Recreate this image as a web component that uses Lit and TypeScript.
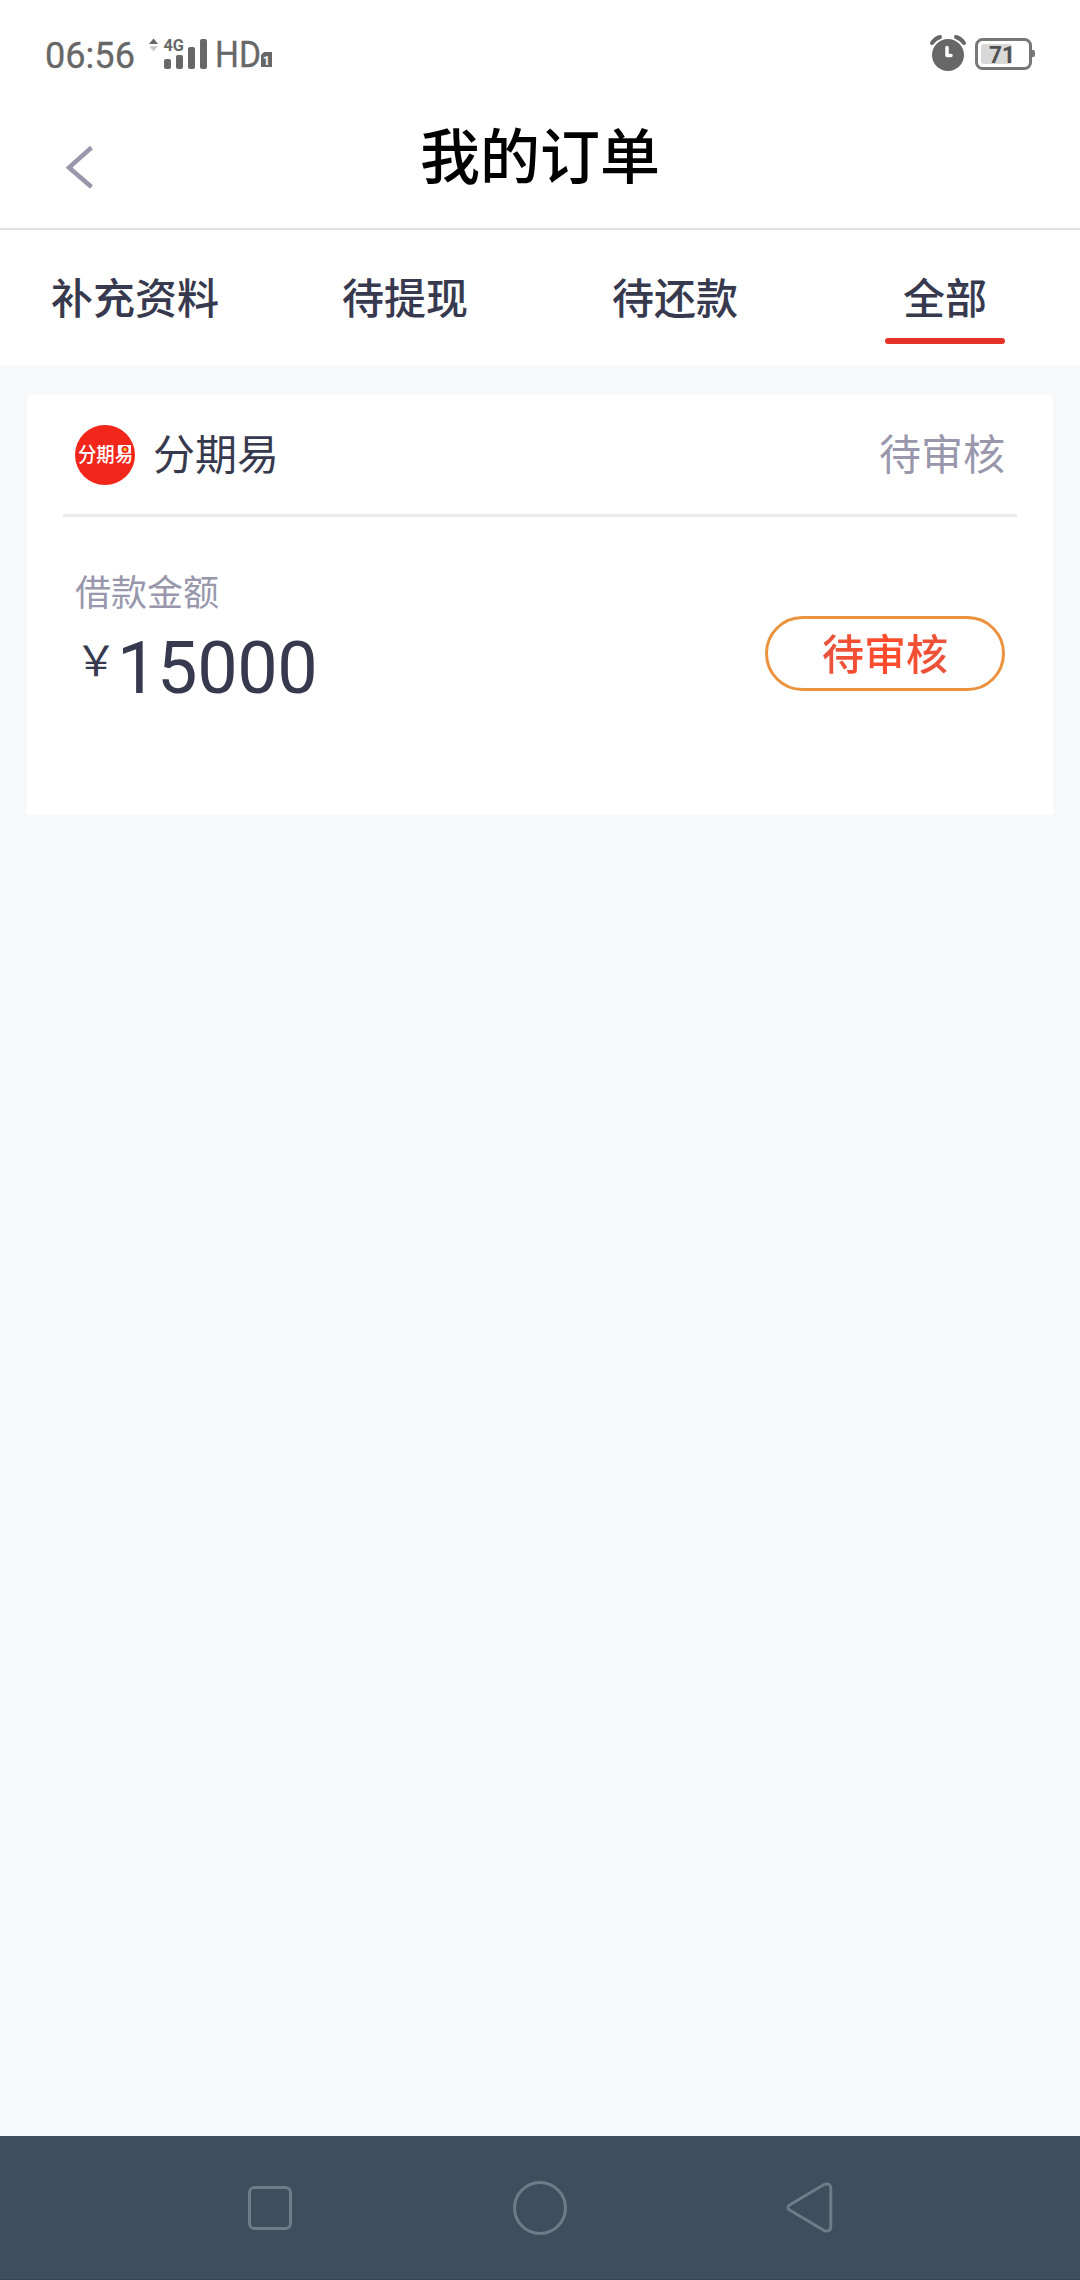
import { LitElement, html, css, svg } from "lit";
import { customElement } from "lit/decorators.js";

@customElement("status-bar")
class StatusBar extends LitElement {
  static styles = css`
    :host { display: flex; justify-content: space-between; height: 105px; box-sizing: border-box; }
    svg { display: block; }
    text { font-family: Roboto, "Liberation Sans", sans-serif; }
    .dim { fill: #676767; }
  `;
  render() {
    return html`
      <svg width="300" height="105" viewBox="0 0 300 105">
        <text class="dim" x="45" y="67.5" font-size="36" stroke="#676767" stroke-width="0.3" textLength="90" lengthAdjust="spacingAndGlyphs">06:56</text>
        <path fill="#676767" d="M149 44l4.500-5.500 4.500 5.500z" />
        <path fill="#c8c8c8" d="M149 46.200h9l-4.500 5z" />
        <text class="dim" x="163.500" y="51" font-size="17" font-weight="700" textLength="20.500" lengthAdjust="spacingAndGlyphs">4G</text>
        <g fill="#676767">
          <rect x="164" y="59" width="7" height="10" rx="2" />
          <rect x="176" y="55" width="7" height="14" rx="2" />
          <rect x="188" y="47" width="7" height="22" rx="2" />
          <rect x="200" y="39" width="7" height="30" rx="2" />
        </g>
        <text class="dim" x="215" y="67" font-size="36" stroke="#676767" stroke-width="0.3" textLength="46" lengthAdjust="spacingAndGlyphs">HD</text>
        <path fill="#676767" d="M264 52h8v15h-11V55z" />
        <text x="263" y="64.500" font-size="12" font-weight="700" fill="#fff">1</text>
      </svg>
      <svg width="160" height="105" viewBox="920 0 160 105">
        <circle cx="948" cy="55" r="16" fill="#676767" />
        <path fill="none" stroke="#676767" stroke-width="4" stroke-linecap="round" d="M932 43q3-4.500 8-6M964 43q-3-4.500-8-6" />
        <path fill="none" stroke="#fff" stroke-width="3.500" stroke-linecap="round" stroke-linejoin="round" d="M947 47.500v8h4" />
        <rect x="976.500" y="39.500" width="54" height="29" rx="6" fill="#fff" stroke="#777" stroke-width="3" />
        <path fill="#777" d="M1032 50h1.500q1.500 0 1.500 3.500t-1.500 3.500H1032z" />
        <rect x="981" y="44" width="31" height="20" rx="3" fill="#d8d8d8" />
        <text x="989" y="63" font-size="24" font-weight="700" fill="#505050" textLength="26" lengthAdjust="spacingAndGlyphs">71</text>
      </svg>
    `;
  }
}

@customElement("order-card")
class OrderCard extends LitElement {
  static styles = css`
    :host { display: block; height: 420px; box-sizing: border-box; background: #fff; border-radius: 4px; padding: 0 36px; }
    .head { display: flex; align-items: center; height: 119px; padding: 0 12px; font-size: 42px; line-height: 60px; color: #373a4e; }
    .head span { margin-bottom: 6px; }
    .logo { display: block; width: 60px; height: 60px; margin-right: 18px; overflow: visible; }
    .head .status { margin-left: auto; color: #9897ac; }
    .rule { height: 3px; background: #ebebeb; }
    .body { display: flex; justify-content: space-between; padding: 46px 12px 0; }
    .label { font-size: 36px; line-height: 54px; color: #9897ac; }
    .amount { display: flex; align-items: flex-start; color: #373a4e; }
    .yen { font-size: 42px; line-height: 60px; margin-top: 11px; }
    .num { font-family: Roboto, "Liberation Sans", sans-serif; font-size: 72px; line-height: 84px; margin-top: 10px; letter-spacing: -0.4px; }
    .btn { display: flex; align-items: center; justify-content: center; box-sizing: border-box; width: 240px; height: 75px; margin-top: 53px; padding-bottom: 4px; border: 3px solid #eb923f; border-radius: 38px; font-size: 42px; line-height: 60px; font-weight: 500; }
    .btn span { background: linear-gradient(90deg, #e8533c, #ff4b2b 50%, #e8533c); background-clip: text; -webkit-background-clip: text; color: transparent; }
  `;
  render() {
    return html`
      <div class="head">
        <svg class="logo" viewBox="0 0 60 60">
          <circle cx="30" cy="30" r="30" fill="#f2261b" />
          <text x="3" y="37" font-size="20.500" font-weight="500" fill="#fff" font-family="'Noto Sans CJK SC', sans-serif" textLength="55" lengthAdjust="spacingAndGlyphs">分期易</text>
          <rect x="43" y="20" width="13" height="8.500" fill="#fff" />
          <circle cx="50" cy="24.500" r="3.500" fill="#f2261b" />
          <circle cx="50" cy="24.500" r="1.700" fill="#ffc62b" />
        </svg>
        <span>分期易</span>
        <span class="status">待审核</span>
      </div>
      <div class="rule"></div>
      <div class="body">
        <div>
          <div class="label">借款金额</div>
          <div class="amount"><span class="yen">${"\uFFE5"}</span><span class="num">15000</span></div>
        </div>
        <div class="btn"><span>待审核</span></div>
      </div>
    `;
  }
}

const navIcons = [
  svg`<rect x="6.500" y="6.500" width="41" height="41" rx="5" />`,
  svg`<circle cx="27" cy="27" r="25.500" />`,
  svg`<path d="M7 23.800L40.700 3.700Q47.800 1 47.800 8V45Q47.800 52 40.700 49.300L7 29.200Q2.500 26.500 7 23.800z" />`,
];

@customElement("app-root")
class AppRoot extends LitElement {
  static styles = css`
    :host { display: flex; flex-direction: column; height: 2280px; width: 1080px; overflow: hidden; background: #f6f8fa; font-family: "Noto Sans CJK SC", sans-serif; }
    .title-bar { display: grid; grid-template-columns: 200px 1fr 200px; height: 125px; box-sizing: border-box; border-bottom: 2px solid #e0e0e0; background: #fff; }
    .back { display: block; margin: 41px 0 0 66px; }
    h1 { margin: 5px 0 0; font-size: 60px; line-height: 86px; font-weight: 500; text-align: center; color: #000; }
    .tabs { display: grid; grid-template-columns: repeat(4, 1fr); height: 135px; background: #fff; }
    .tab { display: flex; flex-direction: column; align-items: center; padding-top: 36px; font-size: 42px; line-height: 60px; font-weight: 500; color: #373a4e; }
    .bar { width: 120px; height: 6px; margin-top: 12px; border-radius: 3px; background: #e43226; }
    status-bar { background: #fff; }
    order-card { margin: 30px 27px 0; }
    nav { display: grid; grid-template-columns: repeat(3, 270px); justify-content: center; align-items: center; height: 144px; margin-top: auto; background: #3d4f5e; box-shadow: inset 0 -1px #364654; }
    nav svg { display: block; justify-self: center; fill: none; stroke: #6d7c89; stroke-width: 3; stroke-linejoin: round; }
  `;
  render() {
    return html`
      <status-bar></status-bar>
      <header class="title-bar">
        <svg class="back" width="30" height="44" viewBox="0 0 30 44"><path fill="none" stroke="#9897ac" stroke-width="4.500" d="M25.500 1.500L3 21.500l22.500 19.500" /></svg>
        <h1>我的订单</h1>
      </header>
      <div class="tabs">
        ${["补充资料", "待提现", "待还款", "全部"].map(
          (t, i) => html`<div class="tab"><span>${t}</span>${i === 3 ? html`<div class="bar"></div>` : ""}</div>`
        )}
      </div>
      <order-card></order-card>
      <nav>${navIcons.map((i) => html`<svg width="54" height="54" viewBox="0 0 54 54">${i}</svg>`)}</nav>
    `;
  }
}
